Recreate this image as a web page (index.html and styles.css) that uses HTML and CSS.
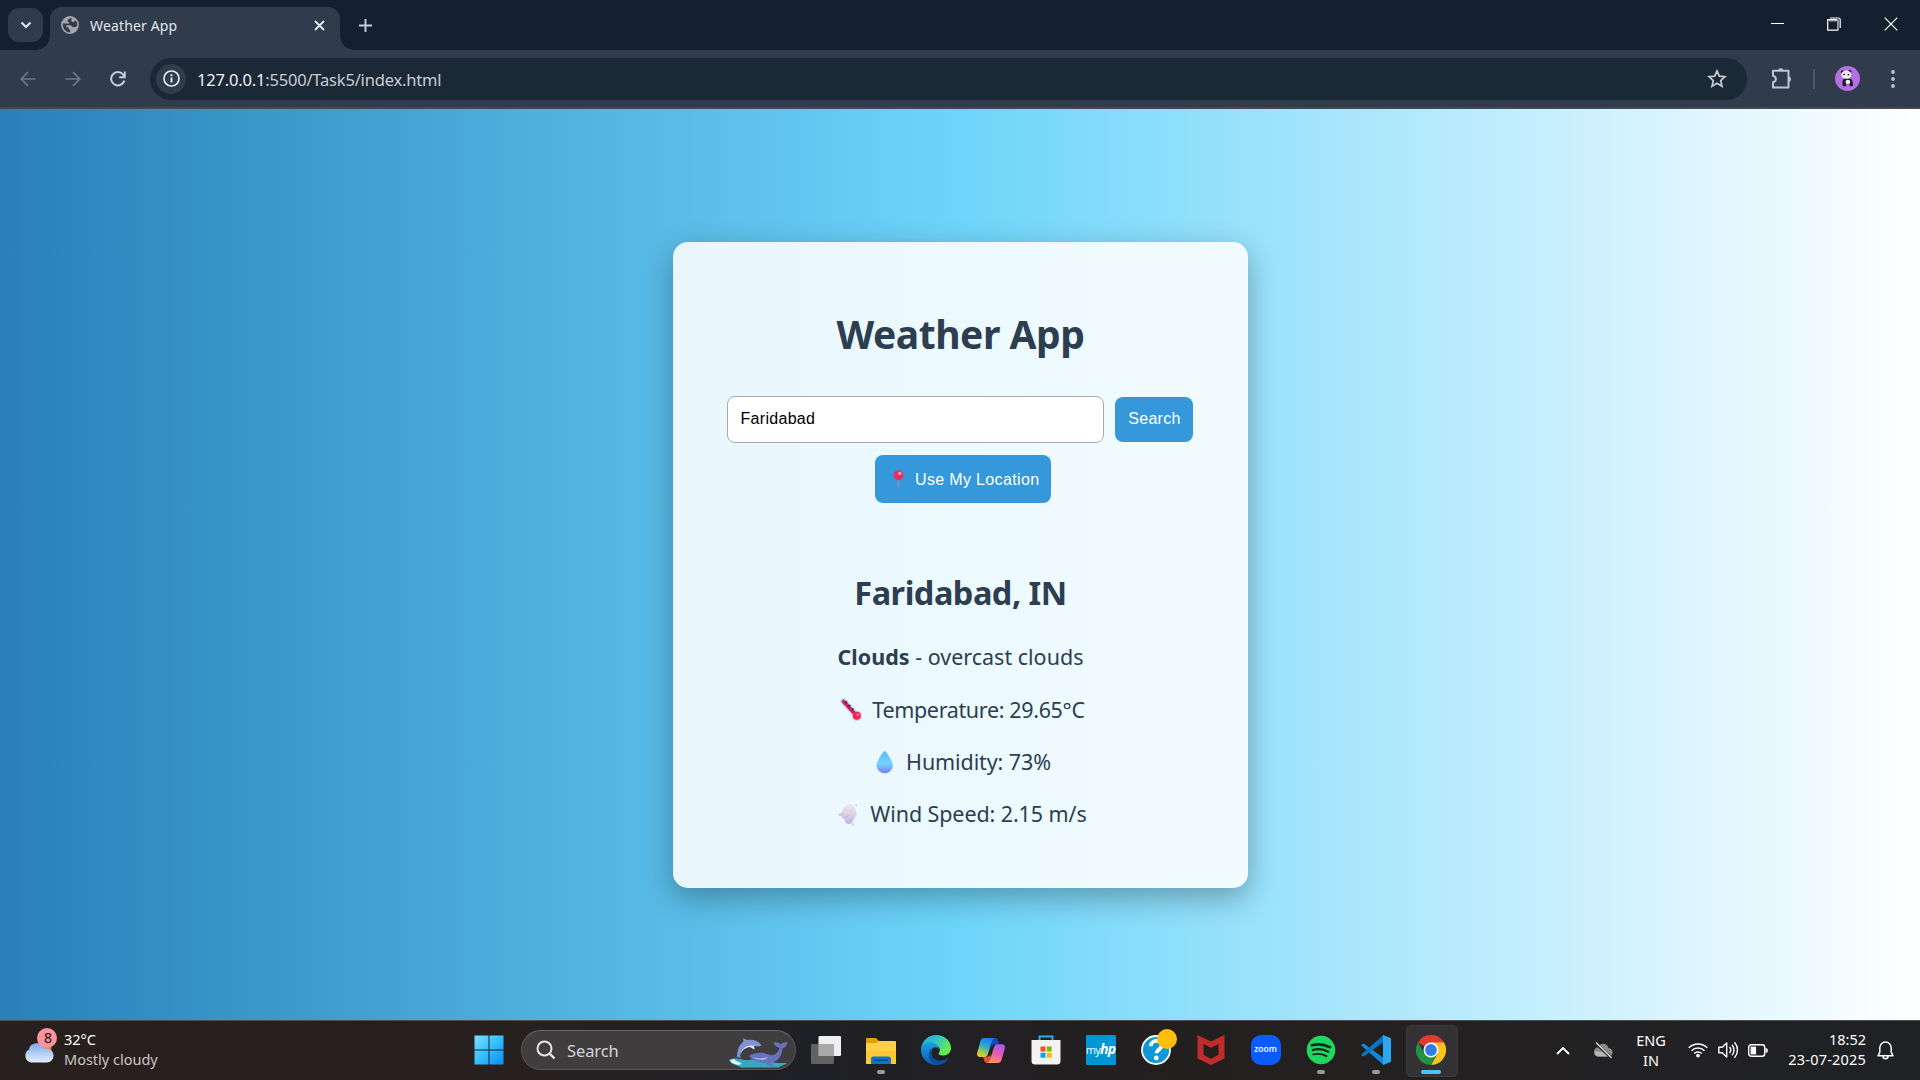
FILE: index.html
```html
<!DOCTYPE html>
<html lang="en">
<head>
<meta charset="utf-8">
<title>Weather App</title>
<link rel="stylesheet" href="styles.css">
</head>
<body>
<div class="tabstrip">
  <div class="tabsearch"><svg width="12" height="8" viewBox="0 0 12 8"><path d="M1.5 1.5 6 6l4.500-4.500" fill="none" stroke="#dfe5ee" stroke-width="2.200"/></svg></div>
  <div class="tab">
    <svg class="globe" width="18" height="18" viewBox="0 0 18 18"><circle cx="9" cy="9" r="8.900" fill="#a3a7ab"/><path d="M10.500 1.900C8 2.200 6.500 3.500 6.600 5c.1 1.300 1.900 1 1.700 2C8 8.200 6 7.500 4.500 7.500H2C1.500 10.500 2.500 13 4.500 14.800c1.500 1.200 3 1.600 4.700 1.500v-2c0-1.200-1.700-.8-1.700-2.300 0-.8-1.500-.6-2.300-1.200-.6-.5-.3-1.600.6-1.600h3.700c1.200 0 1 1.700 2 1.700h3.500l1.200-1.300c.2-2.300-.6-4-1.700-5.300-.6 1-1.500 1.700-2.700 1.600-1.500 0-1.600-1.200-1.300-2.200z" fill="#303b4b"/></svg>
    <span class="tab-title">Weather App</span>
    <svg class="tab-close" width="11" height="11" viewBox="0 0 11 11"><path d="M1 1l9 9M10 1l-9 9" stroke="#e3e7ee" stroke-width="1.800"/></svg>
  </div>
  <svg class="plus" width="13" height="13" viewBox="0 0 13 13"><path d="M6.500 0v13M0 6.500h13" stroke="#c5cedd" stroke-width="1.900"/></svg>
  <div class="winctl">
    <svg width="14" height="14" viewBox="0 0 14 14"><path d="M1 6.500h13" stroke="#fff" stroke-width="1"/></svg>
    <svg width="14" height="14" viewBox="0 0 14 14"><path d="M3 1h8.500q1.700 0 1.700 1.700V11" fill="none" stroke="#fff" stroke-width="1.200"/><path d="M2 3.500h9v9.500" fill="none" stroke="#8c94a0" stroke-width="2"/><path d="M11.300 13.200H.7V2.600h9.500" fill="none" stroke="#fff" stroke-width="1.200"/></svg>
    <svg width="14" height="14" viewBox="0 0 14 14"><path d="M.7.700l12.600 12.600M13.300.700.700 13.300" stroke="#fff" stroke-width="1.200"/></svg>
  </div>
</div>
<div class="toolbar">
  <div class="nav">
    <svg width="16" height="16" viewBox="0 0 16 16"><path d="M15.500 8H1.500M8 1.200 1.200 8 8 14.800" fill="none" stroke="#6d7787" stroke-width="1.700"/></svg>
    <svg width="16" height="16" viewBox="0 0 16 16"><path d="M.5 8h14M8 1.200 14.800 8 8 14.800" fill="none" stroke="#6d7787" stroke-width="1.700"/></svg>
    <svg width="16" height="16" viewBox="0 0 16 16"><path d="M14.300 9.600A6.700 6.700 0 1 1 13 3.400l1.500 1.800" fill="none" stroke="#c3cede" stroke-width="2"/><path d="M14.800.500v5.700H9.200" fill="none" stroke="#c3cede" stroke-width="1.900"/></svg>
  </div>
  <div class="omnibox">
    <span class="siteinfo"><svg width="17" height="17" viewBox="0 0 17 17"><circle cx="8.500" cy="8.500" r="7.500" fill="none" stroke="#e4e9f1" stroke-width="1.700"/><path d="M8.500 7.500v5M8.500 4.300v1.900" stroke="#e4e9f1" stroke-width="1.900"/></svg></span>
    <span class="url"><b>127.0.0.1</b>:5500/Task5/index.html</span>
    <svg class="star" width="20" height="19" viewBox="0 0 20 19"><path d="M10 1.900l2.300 5.300 5.700.5-4.300 3.800 1.300 5.700L10 14.200l-5 3 1.300-5.700L2 7.700l5.700-.5z" fill="none" stroke="#c6cacc" stroke-width="1.700"/></svg>
  </div>
  <svg class="ext" width="22" height="22" viewBox="0 0 22 22"><path d="M2 2.700h15.500v16.800H2v-5.300c3.800-.7 3.800-5.800 0-6.500z" fill="none" stroke="#b6c5e0" stroke-width="2" stroke-linejoin="round"/><path d="M7 3a2.700 2.700 0 0 1 5.400 0zM17.300 8.500a2.700 2.700 0 0 1 0 5.400z" fill="#b6c5e0"/></svg>
  <i class="divider"></i>
  <svg class="avatar" width="25" height="25" viewBox="0 0 25 25"><circle cx="12.500" cy="12.500" r="12.500" fill="#b36fe4"/><circle cx="7.500" cy="6" r="1.700" fill="#222"/><circle cx="14.800" cy="5.400" r="1.600" fill="#222"/><ellipse cx="11.300" cy="8.800" rx="5" ry="4.200" fill="#f1eef1"/><path d="M8.300 9l1.600-1M12.500 8.600l1.700.2" stroke="#222" stroke-width="1.400"/><path d="M8.500 12.700h7.500c2 2 2.300 6 1.700 7.600h-3.200v-3h-3.300v3H8c-.8-2.500-.8-5.500.5-7.600z" fill="#1e1b20"/><ellipse cx="12.900" cy="15.900" rx="2.400" ry="2.100" fill="#efecef"/></svg>
  <svg class="kebab" width="4" height="18" viewBox="0 0 4 18"><g fill="#b6c2d8"><circle cx="2" cy="2" r="1.900"/><circle cx="2" cy="9" r="1.900"/><circle cx="2" cy="16" r="1.900"/></g></svg>
</div>

<main class="page">
  <section class="card">
    <h1>Weather App</h1>
    <div class="search-row">
      <div class="field">Faridabad</div>
      <button class="btn btn-search">Search</button>
    </div>
    <button class="btn btn-loc">
      <svg width="22" height="18" viewBox="0 0 22 18"><path d="M11.500 9v8.500" stroke="#8b8fa8" stroke-width="1.600"/><circle cx="11.500" cy="5.200" r="5" fill="#e8305f"/><circle cx="12.800" cy="3.400" r="1.600" fill="#ff9dbb"/></svg>
      <span>Use My Location</span>
    </button>
    <h2>Faridabad, IN</h2>
    <p class="sky"><span><strong>Clouds</strong> - overcast clouds</span></p>
    <p class="temp">
      <svg width="30" height="24" viewBox="0 0 30 24"><path d="M7.500 3.500 20.500 17.500" stroke="#b5dcf7" stroke-width="6.500" stroke-linecap="round"/><circle cx="20.800" cy="17.800" r="5.300" fill="#b5dcf7"/><path d="M7.500 3.500 20.500 17.500" stroke="#d81b60" stroke-width="3.600" stroke-linecap="round"/><circle cx="20.800" cy="17.800" r="4" fill="#f5254f"/><circle cx="21.800" cy="16.700" r="1.200" fill="#ff8ba6"/><path d="M9.500 5.200l1.500-1.600M12.700 8.600l1.500-1.500M15.900 12l1.500-1.500" stroke="#2a2b50" stroke-width="1.600"/></svg>
      <span>Temperature: 29.65°C</span>
    </p>
    <p class="humid">
      <svg width="30" height="24" viewBox="0 0 30 24"><defs><linearGradient id="drop" x1="0" y1="0" x2="0" y2="1"><stop offset="0" stop-color="#5ab8f5"/><stop offset=".55" stop-color="#74d6ff"/><stop offset="1" stop-color="#7b7cfb"/></linearGradient></defs><path d="M14.700 1c1.200 0 8.200 10 8.200 14.500a8.200 7.800 0 0 1-16.400 0C6.500 11 13.500 1 14.700 1z" fill="url(#drop)"/></svg>
      <span>Humidity: 73%</span>
    </p>
    <p class="wind">
      <svg width="30" height="24" viewBox="0 0 30 24"><defs><linearGradient id="puff" x1="0" y1="0" x2="0" y2="1"><stop offset="0" stop-color="#ebe4ec"/><stop offset=".6" stop-color="#dacee0"/><stop offset="1" stop-color="#bdb0f3"/></linearGradient></defs><path d="M3 12.500l5-2.200c-.3-3 1.200-4.500 3-5C12 2 17 .8 18.800 4.300c2.600.5 3.400 3 2.800 4.700 1.700 2 1.300 4.700-.6 6-.3 1.700-1 2.700-2 3.200-.3 3.300-3.400 4.500-5.700 3.500-2.200-.8-2.800-2.700-2.300-4.400-1.800-.3-2.800-1.300-3-2.800z" fill="url(#puff)"/><path d="M21 3l2-1.600-.5 3.500z" fill="#dccfe6"/><circle cx="19" cy="22.300" r="1" fill="#cbb7fa"/><path d="M5 13c2 .5 4 0 5.500-2M8.500 15c3 1 5 0 6-2" fill="none" stroke="#c3b1cf" stroke-width=".9"/></svg>
      <span>Wind Speed: 2.15 m/s</span>
    </p>
  </section>
</main>

<footer class="taskbar">
  <div class="weather">
    <svg width="36" height="38" viewBox="0 0 36 38"><defs><linearGradient id="cl" x1="0" y1="0" x2="0" y2="1"><stop offset="0" stop-color="#7fa9ea"/><stop offset="1" stop-color="#e3eefd"/></linearGradient></defs><circle cx="21" cy="21" r="7.500" fill="#f47a10"/><path d="M8 35.500A7 7 0 0 1 6 22.500C7 14.500 19 14 21 21.500c5-1 9.500 2 9.500 7 0 4-3 7-6.500 7z" fill="url(#cl)"/><circle cx="24" cy="11" r="10" fill="#fc929c"/></svg>
    <span class="badge">8</span>
    <div class="wtext"><span>32°C</span><span class="muted">Mostly cloudy</span></div>
  </div>
  <div class="slot"><svg width="30" height="30" viewBox="0 0 30 30"><defs><linearGradient id="win" x1="0" y1="0" x2="1" y2="1"><stop offset="0" stop-color="#7fdcff"/><stop offset=".45" stop-color="#38c4fb"/><stop offset="1" stop-color="#0a8cf8"/></linearGradient></defs><path d="M.5.5h14v14H.5zM15.500.500h14v14h-14zM.5 15.500h14v14H.5zM15.500 15.500h14v14h-14z" fill="url(#win)"/></svg></div>
  <div class="searchbox">
    <svg width="20" height="20" viewBox="0 0 20 20"><circle cx="8.500" cy="8.500" r="7" fill="none" stroke="#e6e6e6" stroke-width="2"/><path d="M13.500 13.500l5 5" stroke="#e6e6e6" stroke-width="2.400"/></svg>
    <span class="hint">Search</span>
    <svg class="whales" width="60" height="30" viewBox="0 0 60 30"><path d="M1 22c8-4 14 1 20 0 9-2 25 4 38 3-4 3-7 3-8 4.500H13C8 27 2 26 1 22z" fill="#35a9c4"/><path d="M2 22l2 3 3 1 3 1 4-1-3-2-3-1-2-2z" fill="#e2f8fb"/><path d="M9 20c0-8 2-13 6.500-16.500L15 0l4 2c6-1 12 1 14.500 5.500-2 1-5 1-7.500.5l.5 3.500L22 9c-5 .5-8 3.500-10 8.500L13 20l-3-1-5 1.500z" fill="#8193d1"/><path d="M32.500 7.600c-5 .6-8-.6-12 .2-4 1-7 4-8.500 8.700 2-4.500 5-7 10-7.500l4.500 2.500L26 8z" fill="#dce4fb"/><path d="M21 18c6-4 15-4 21-1 4 1 8-2 9.500-7-3-1-6-3-5.500-5.500 3-.5 5 .5 6.500 2 2-1.500 4-2.500 7-2-.5 3-2 5-5 6C54 18 50 24 42 25l4 3c-4 1-7-1-8-3-7 0-13-2-17-7z" fill="#6672bb"/><path d="M24 19c5 1.500 11 1.500 16 0-2 4-9 4-16 0z" fill="#a5b0e6"/></svg>
  </div>
  <div class="slot"><svg width="30" height="28" viewBox="0 0 30 28"><rect x="7.500" width="22.500" height="20" rx="1" fill="#efefef"/><rect y="8" width="23" height="20" rx="1" fill="#6f6f6f" fill-opacity=".85"/><rect x="7.500" y="8" width="15.500" height="12" fill="#a9a9a9"/></svg></div>
  <div class="slot run"><svg width="30" height="27" viewBox="0 0 30 27"><path d="M0 2a1 1 0 0 1 1-1h9l3 3v4H0z" fill="#e0a000"/><path d="M0 6h10.500l2.500-2H29a1 1 0 0 1 1 1v22H0z" fill="#ffd044"/><path d="M0 14h30v13H0z" fill="#f9c42c" fill-opacity=".6"/><path d="M5 27v-5a2.500 2.500 0 0 1 2.500-2.500h15A2.500 2.500 0 0 1 25 22v5z" fill="#1272c4"/><path d="M8 23.200h14" stroke="#0a4a86" stroke-width="1.400"/></svg></div>
  <div class="slot"><svg width="30" height="30" viewBox="0 0 30 30"><defs><linearGradient id="eg" x1="0" y1="0" x2="1" y2=".5"><stop offset="0" stop-color="#21a6e3"/><stop offset=".5" stop-color="#30c3c8"/><stop offset="1" stop-color="#6bea49"/></linearGradient><linearGradient id="eb" x1="0" y1="0" x2="0" y2="1"><stop offset="0" stop-color="#1c9fe0"/><stop offset="1" stop-color="#0c5bb4"/></linearGradient></defs><path d="M0 14C1 6 7 0 15 0c9 0 15 6.500 15 13 0 5-4 7.500-8 7.500-3.500 0-5-1.300-4.300-2.500C21 14 17 9 11 9 5 9 1 12 0 14z" fill="url(#eg)"/><path d="M0 14c2-6 7-7.500 11-6.500 4.500 1 7 4 7 7-1-2-3-2.500-4.500-2-4.500 1.500-4 9.500.5 12.500 4 2.500 9 2 13.500-2C25 27.500 20.500 30 15 30 6.500 30 0 23 0 15z" fill="url(#eb)"/><path d="M13.500 12.500c-5 1.300-4.500 9.500 1 12 4 1.800 9 1 13-1.500-3 5-8 7-13 6.500C8 28 6 19 9.500 14.500c1-1.200 2.500-2 4-2z" fill="#0b4f9d"/></svg></div>
  <div class="slot"><svg width="28" height="25" viewBox="0 0 28 25"><defs><linearGradient id="ca" x1=".6" y1="0" x2=".2" y2="1"><stop offset="0" stop-color="#1b7be8"/><stop offset=".4" stop-color="#27a9d8"/><stop offset=".75" stop-color="#9ccc48"/><stop offset="1" stop-color="#f5c51d"/></linearGradient><linearGradient id="cb" x1=".7" y1="0" x2=".3" y2="1"><stop offset="0" stop-color="#a65af0"/><stop offset=".5" stop-color="#e85bb0"/><stop offset="1" stop-color="#ff9a55"/></linearGradient></defs><path d="M14 0h4c2 0 2.600 1.300 3.200 3l1 3.300h-4c-2 0-3 1-3.500 3z" fill="#1649c8"/><path d="M14 25h-4c-2 0-2.500-1.500-3-3l-1-3.200h4c2 0 3-1 3.500-3z" fill="#e04f3c"/><path d="M7 0h11c-2 .5-2.700 2-3.300 4L11 16c-.6 2-1.600 3-3.500 3H3c-2.500 0-3.500-2-2.700-4.500L3.500 3C4.200 1 5.200 0 7 0z" fill="url(#ca)"/><path d="M21 25H10c2-.5 2.700-2 3.300-4L17 9.300c.6-2 1.600-3 3.500-3H25c2.500 0 3.500 2 2.700 4.500L24.500 22c-.7 2-1.700 3-3.500 3z" fill="url(#cb)"/></svg></div>
  <div class="slot"><svg width="30" height="30" viewBox="0 0 30 30"><path d="M8.500 6V1.500h13V6" fill="none" stroke="#29aee8" stroke-width="1.900"/><path d="M.5 5h29v21a3.500 3.500 0 0 1-3.500 3.500H4A3.500 3.500 0 0 1 .5 26z" fill="#f2f2f2"/><path fill="#f25022" d="M9.500 11.500h5v5h-5z"/><path fill="#7fba00" d="M15.700 11.500h5v5h-5z"/><path fill="#00a4ef" d="M9.500 17.700h5v5h-5z"/><path fill="#ffb900" d="M15.700 17.700h5v5h-5z"/></svg></div>
  <div class="slot"><div class="myhp">my<b>hp</b></div></div>
  <div class="slot"><svg class="help" width="36" height="36" viewBox="0 0 36 36"><circle cx="15" cy="21" r="14" fill="#0f98d8" stroke="#fff" stroke-width="1.800"/><path d="M9.700 17.300c0-7 11-7 11-.8 0 4-5.200 3.700-5.200 7.800" fill="none" stroke="#fff" stroke-width="3.800"/><circle cx="15.300" cy="29" r="2.400" fill="#fff"/><circle cx="26" cy="10" r="10" fill="#ffbe0b"/></svg></div>
  <div class="slot"><svg width="28" height="30" viewBox="0 0 28 30"><path d="M.5 0 14 6.500 27.500 0v23.500L14 30 .5 23.500z" fill="#c02c2b"/><path d="M6.500 9 14 12.700 21.500 9v10.800L14 23.700l-7.500-3.900z" fill="#241f1f"/></svg></div>
  <div class="slot"><div class="zoomapp">zoom</div></div>
  <div class="slot run"><svg width="30" height="30" viewBox="0 0 30 30"><circle cx="15" cy="15" r="14.300" fill="#1ed760"/><g fill="none" stroke="#12251a" stroke-linecap="round"><path d="M6 10.300c6-1.800 12.500-1 18 1.900" stroke-width="2.700"/><path d="M6.800 15c5-1.400 10.800-.8 15.500 1.800" stroke-width="2.300"/><path d="M7.300 19.400c4.500-1 9-.5 13.200 1.700" stroke-width="1.900"/></g></svg></div>
  <div class="slot run"><svg width="30" height="30" viewBox="0 0 30 30"><path d="M2.800 8.500 22.500 23v7L.5 10.700q-.5-.7 0-1.300z" fill="#1389d6"/><path d="M2.800 21.500 22.500 7V0L.5 19.300q-.5.7 0 1.300z" fill="#0c74bd"/><path d="M22 0l8 3.200v23.600L22 30z" fill="#2aa9f2"/></svg></div>
  <div class="slot active"><svg width="30" height="30" viewBox="0 0 30 30"><path d="M15 15 2 7.500A15 15 0 0 1 28 7.500z" fill="#e33b2e"/><path d="M15 7.500h13A15 15 0 0 1 15 30l6.500-11.300z" fill="#fcc31e"/><path d="M2 7.500A15 15 0 0 0 15 30l6.500-11.300L15 15l-6.500 3.700z" fill="#229342"/><circle cx="15" cy="15" r="7.500" fill="#fff"/><circle cx="15" cy="15" r="5.900" fill="#2f7de9"/></svg></div>
  <div class="tray">
    <svg class="chev" width="14" height="9" viewBox="0 0 14 9"><path d="M1 8l6-6 6 6" fill="none" stroke="#fff" stroke-width="1.900"/></svg>
    <svg class="cloud" width="20" height="17" viewBox="0 0 20 17"><path d="M5 14.500a4.700 4.700 0 0 1 0-9.300C7 .5 14 .5 15.500 6c5.500.5 5.500 8.500 0 8.500z" fill="#8b8b8b"/><path d="M5 14.500c-3-.3-4-3-3-5 4-1 9 0 16.500 4l-3 1z" fill="#b5b5b5"/><path d="M2.500 1l16 15" stroke="#242326" stroke-width="3"/><path d="M3 .5l15.500 15.300" stroke="#e6e6e6" stroke-width="1.300"/></svg>
    <div class="lang"><span>ENG</span><span>IN</span></div>
    <svg class="wifi" width="20" height="16" viewBox="0 0 20 16"><g fill="none" stroke="#fff" stroke-width="1.400"><path d="M.7 5.800a13.200 13.200 0 0 1 18.600 0"/><path d="M3.500 8.700a9.200 9.200 0 0 1 13 0"/><path d="M6.200 11.500a5.400 5.400 0 0 1 7.600 0"/></g><circle cx="10" cy="13.600" r="1.900" fill="#fff"/></svg>
    <svg class="vol" width="21" height="18" viewBox="0 0 21 18"><path d="M.8 6.200h3.400L8.700 2v14l-4.500-4.200H.8z" fill="none" stroke="#fff" stroke-width="1.400" stroke-linejoin="round"/><path d="M11.500 6a4.500 4.500 0 0 1 0 6M14 3.700a8 8 0 0 1 0 10.600M16.500 1.300a11.500 11.500 0 0 1 0 15.400" fill="none" stroke="#fff" stroke-width="1.400"/></svg>
    <svg class="bat" width="20" height="13" viewBox="0 0 20 13"><rect x=".7" y=".7" width="16" height="11.600" rx="2.500" fill="none" stroke="#fff" stroke-width="1.400"/><rect x="2.600" y="2.600" width="5.500" height="7.800" fill="#fff"/><path d="M17.500 4.200h1q1.300 0 1.300 2.300t-1.300 2.300h-1z" fill="#fff"/></svg>
    <div class="clock"><span>18:52</span><span class="date">23-07-2025</span></div>
    <svg class="bell" width="17" height="19" viewBox="0 0 17 19"><path d="M8.500 1a5.700 5.700 0 0 0-5.700 5.700v4.500L1 14.800h15l-1.800-3.600V6.700A5.700 5.700 0 0 0 8.500 1zM6 15.200a2.500 2.500 0 0 0 5 0" fill="none" stroke="#fff" stroke-width="1.500" stroke-linejoin="round"/></svg>
  </div>
</footer>
</body>
</html>
```
FILE: styles.css
```css
* { box-sizing: border-box; }
body {
  margin: 0;
  width: 1920px;
  height: 1080px;
  overflow: hidden;
  display: flex;
  flex-direction: column;
  font-family: "Noto Sans", "Open Sans", sans-serif;
}
svg { display: block; flex: none; }
button { font-family: inherit; border: 0; }

/* Browser tab strip */
.tabstrip {
  height: 50px;
  background: #14202f;
  display: flex;
  padding-left: 8px;
}
.tabsearch {
  width: 35px;
  height: 34px;
  margin-top: 8px;
  border-radius: 11px;
  background: #303b4b;
  display: flex;
  align-items: center;
  justify-content: center;
}
.tab {
  position: relative;
  width: 290px;
  height: 43px;
  margin: 7px 0 0 7px;
  border-radius: 12px 12px 0 0;
  background: #303b4b;
  display: flex;
  align-items: center;
  padding: 0 15px 7px 11px;
}
.tab::before,
.tab::after {
  content: "";
  position: absolute;
  bottom: 0;
  width: 14px;
  height: 14px;
}
.tab::before { left: -14px; background: radial-gradient(circle at 0 0, transparent 13.500px, #303b4b 14px); }
.tab::after { right: -14px; background: radial-gradient(circle at 100% 0, transparent 13.500px, #303b4b 14px); }
.tab-title { margin-left: 11px; font-size: 14px; letter-spacing: 0.150px; color: #e3e7ee; flex: 1; white-space: nowrap; }
.plus { margin: 19px 0 0 19px; }
.winctl { margin: 17px 22px 0 auto; display: flex; gap: 43px; }

/* Toolbar */
.toolbar {
  height: 59px;
  background: #303b4b;
  border-bottom: 2px solid #454850;
  display: flex;
  align-items: center;
}
.nav { width: 150px; padding-left: 20px; display: flex; gap: 29px; }
.omnibox {
  width: 1597px;
  height: 42px;
  border-radius: 21px;
  background: #1b2836;
  display: flex;
  align-items: center;
  padding: 0 20px 0 6px;
}
.siteinfo {
  width: 30px;
  height: 30px;
  border-radius: 50%;
  background: #303b4b;
  display: flex;
  align-items: center;
  justify-content: center;
}
.url { margin: 1px 0 0 11px; font-size: 16.500px; letter-spacing: -0.190px; color: #c9cdd2; }
.url b { font-weight: 400; color: #eef1f5; }
.star { margin-left: auto; }
.ext { margin-left: 24px; }
.divider { width: 2px; height: 20px; margin-left: 20px; background: #4b5768; }
.avatar { margin-left: 20px; }
.kebab { margin-left: 31px; }

/* Page */
.page {
  flex: 1;
  display: flex;
  align-items: center;
  justify-content: center;
  background: linear-gradient(to right, #2980b9, #6dd5fa, #ffffff);
}
.card {
  width: 575px;
  height: 646px;
  margin-left: 1px;
  padding-top: 65px;
  border-radius: 15px;
  background: rgba(255, 255, 255, 0.87);
  box-shadow: 0 10px 30px rgba(0, 0, 0, 0.3);
  color: #2c3e50;
  display: flex;
  flex-direction: column;
  align-items: center;
}
h1 { margin: 0; font-size: 39px; line-height: 54px; letter-spacing: -0.450px; }
h2 { margin: 68px 0 5.700px; font-size: 32.500px; line-height: 44px; letter-spacing: -0.500px; }
p {
  margin: 22.200px 0 0;
  font-size: 21.500px;
  line-height: 30px;
  display: flex;
  align-items: center;
  gap: 6px;
}
.temp { letter-spacing: -0.350px; }
.humid { letter-spacing: -0.100px; }
.wind { letter-spacing: -0.090px; }
.search-row { display: flex; align-items: center; gap: 11px; margin: 35px 2px 0 0; }
.field {
  width: 377px;
  height: 47px;
  padding: 0 13px 1px;
  display: flex;
  align-items: center;
  border: 1px solid #aaa;
  border-radius: 8px;
  background: #fff;
  color: #000;
  font: 16px "Liberation Sans", Arial, sans-serif;
  letter-spacing: 0.300px;
}
.btn {
  width: 78px;
  height: 45px;
  padding: 0;
  border-radius: 8px;
  background: #3498db;
  color: #fff;
  font: 16px "Liberation Sans", Arial, sans-serif;
  letter-spacing: 0.300px;
}
.btn-search { padding: 0 0 1px 2px; }
.btn-loc {
  width: 176px;
  height: 48px;
  margin: 12px 0 0 5px;
  padding: 1px 12px 0;
  display: flex;
  align-items: center;
  gap: 6px;
  white-space: nowrap;
}
.btn-loc span { letter-spacing: 0.350px; padding-top: 2px; }

/* Taskbar */
.taskbar {
  height: 60px;
  border-top: 1px solid #4f4d4d;
  background: linear-gradient(to right, #281f1f, #27201f 25%, #1f2025 42%, #241f1f 62%, #232122 78%, #1f2124);
  display: flex;
  color: #fff;
  font-size: 14.500px;
}
.weather { position: relative; width: 461.500px; display: flex; padding: 6px 0 0 24px; }
.weather svg { margin-left: -1px; }
.badge { position: absolute; left: 38px; top: 7px; width: 20px; line-height: 20px; text-align: center; font-size: 14px; color: #1b1012; }
.wtext { display: flex; flex-direction: column; line-height: 20px; margin: 2px 0 0 5px; align-items: flex-start; }
.muted { color: #c9c6c5; }
.slot { position: relative; width: 55px; height: 58px; display: flex; align-items: center; justify-content: center; }
.slot.run::after,
.slot.active::after {
  content: "";
  position: absolute;
  left: 23.500px;
  bottom: 5px;
  width: 8px;
  height: 4px;
  border-radius: 2px;
  background: #9a9a9a;
}
.slot.active::after { left: 17.500px; width: 20px; background: #4cc2ff; }
.slot.active::before {
  content: "";
  position: absolute;
  left: 2.500px;
  top: 4px;
  width: 50px;
  height: 50px;
  border-radius: 5px;
  background: #333134;
  border: 1px solid #3d3b3e;
}
.slot svg { position: relative; }
.searchbox {
  width: 275px;
  height: 40px;
  margin: 9px 2px 0 4.500px;
  border-radius: 20px;
  background: #403d3f;
  border: 1px solid #575456;
  border-top-color: #6b6769;
  display: flex;
  align-items: center;
  padding: 0 7px 0 14px;
  font-size: 16.500px;
  color: #d6d4d5;
}
.hint { margin-left: 11px; letter-spacing: -0.100px; }
.whales { margin: 6px 0 0 auto; }
.myhp {
  width: 30px;
  height: 30px;
  background: #0096d6;
  font: 11px/28px "Open Sans", sans-serif;
  letter-spacing: -0.700px;
  text-align: center;
  border-radius: 1px;
}
.myhp b { font-size: 14px; font-style: italic; }
.help { margin: -6px -6px 0 0; }
.zoomapp {
  width: 30px;
  height: 30px;
  border-radius: 10px;
  background: #0b5cff;
  font: 600 8.500px/28px "Open Sans", sans-serif;
  text-align: center;
}
.tray { flex: 1; height: 58px; display: flex; align-items: center; }
.chev { margin-left: 98px; }
.cloud { margin-left: 23px; }
.lang { width: 60px; margin-left: 8px; }
.lang, .clock { display: flex; flex-direction: column; line-height: 20px; }
.lang { align-items: center; }
.wifi { margin-left: 7px; }
.vol { margin-left: 10px; }
.bat { margin-left: 9px; }
.clock { width: 98px; margin-top: -2px; align-items: flex-end; }
.date { letter-spacing: 0.200px; }
.bell { margin-left: 11px; }
```
